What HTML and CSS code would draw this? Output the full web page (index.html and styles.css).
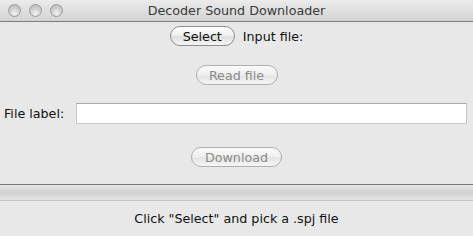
FILE: index.html
```html
<!DOCTYPE html>
<html lang="en">
<head>
  <meta charset="UTF-8">
  <title>Decoder Sound Downloader</title>
  <link rel="stylesheet" href="styles.css">
</head>
<body>
  <div class="window">
    <div class="titlebar">
      <div class="lights">
        <span class="light"></span>
        <span class="light"></span>
        <span class="light"></span>
      </div>
      <div class="title">Decoder Sound Downloader</div>
      <div></div>
    </div>

    <div class="row row-select">
      <button class="btn">Select</button>
      <span>Input file:</span>
    </div>

    <div class="row row-read">
      <button class="btn" disabled>Read file</button>
    </div>

    <div class="row row-label">
      <label for="fileLabel">File label:</label>
      <input type="text" id="fileLabel">
    </div>

    <div class="row row-download">
      <button class="btn" disabled>Download</button>
    </div>

    <div class="splitter"></div>

    <div class="status">Click "Select" and pick a .spj file</div>
  </div>
</body>
</html>
```

FILE: styles.css
```css
body { margin: 0; background: #e8e8e8; font-family: "DejaVu Sans", sans-serif; font-size: 12.7px; color: #111; }
.window { width: 473px; height: 236px; overflow: hidden; display: flex; flex-direction: column; }

.titlebar {
  height: 21px;
  border-bottom: 1px solid #7c7c7c;
  background: linear-gradient(#ebebeb, #d3d3d3);
  display: grid;
  grid-template-columns: 1fr auto 1fr;
  align-items: center;
}
.lights { display: flex; gap: 8px; padding-left: 8px; }
.light {
  width: 13px;
  height: 13px;
  border-radius: 50%;
  box-sizing: border-box;
  border: 1px solid #9a9a9a;
  background: radial-gradient(circle at 50% 75%, #f4f4f4 0, #d2d2d2 45%, #b5b5b5 100%);
}
.title { color: #3a3a3a; }

.row { display: flex; align-items: center; justify-content: center; }
.row-select { margin-top: 4px; gap: 8px; }
.row-read { margin-top: 19px; }
.row-label { margin-top: 18px; justify-content: flex-start; padding-left: 4px; }
.row-label label { width: 72px; }
.row-download { margin-top: 23px; }

.btn {
  height: 20px;
  padding: 0 12px;
  border: 1px solid #8c8c8c;
  border-radius: 10px;
  background: linear-gradient(#ffffff, #f0f0f0 45%, #dedede 55%, #f6f6f6);
  font-family: inherit;
  font-size: 12.7px;
  color: #111;
  white-space: nowrap;
}
.btn:disabled { border-color: #b0b0b0; color: #8a8a8a; background: linear-gradient(#fafafa, #efefef 50%, #e4e4e4 55%, #f6f6f6); }
.row-read .btn { width: 82px; padding: 0; }
.row-download .btn { width: 91px; padding: 0; }

.row-label input {
  width: 391px;
  height: 21px;
  box-sizing: border-box;
  border: 1px solid #c8c8c8;
  border-top-color: #a9a9a9;
  background: #fff;
}

.splitter {
  margin-top: 17px;
  height: 15px;
  border-top: 1px solid #7a7a7a;
  border-bottom: 1px solid #c4c4c4;
  background: linear-gradient(#e6e6e6, #d2d2d2 50%, #e4e4e4);
}
.status { margin-top: 10px; text-align: center; }
```
